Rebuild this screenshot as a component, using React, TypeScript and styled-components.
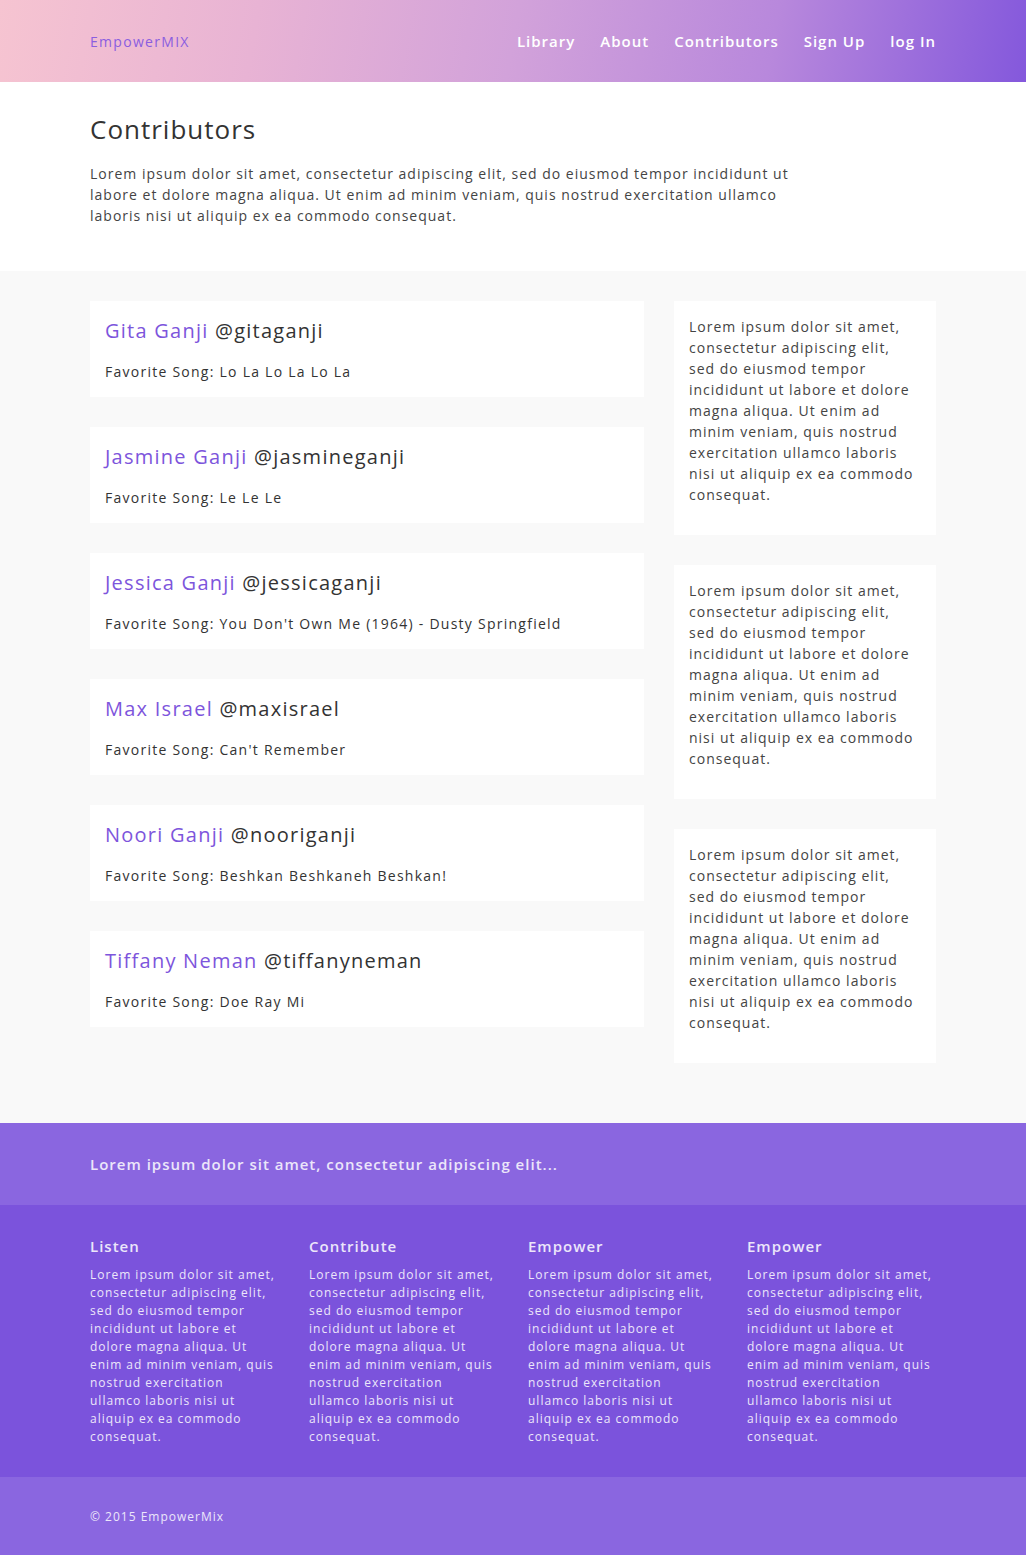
import React from 'react';
import styled, { createGlobalStyle } from 'styled-components';

type Contributor = {
  name: string;
  handle: string;
  song: string;
};

const contributors: Contributor[] = [
  { name: 'Gita Ganji', handle: '@gitaganji', song: 'Lo La Lo La Lo La' },
  { name: 'Jasmine Ganji', handle: '@jasmineganji', song: 'Le Le Le' },
  { name: 'Jessica Ganji', handle: '@jessicaganji', song: "You Don't Own Me (1964) - Dusty Springfield" },
  { name: 'Max Israel', handle: '@maxisrael', song: "Can't Remember" },
  { name: 'Noori Ganji', handle: '@nooriganji', song: 'Beshkan Beshkaneh Beshkan!' },
  { name: 'Tiffany Neman', handle: '@tiffanyneman', song: 'Doe Ray Mi' },
];

const lorem =
  'Lorem ipsum dolor sit amet, consectetur adipiscing elit, sed do eiusmod tempor incididunt ut labore et dolore magna aliqua. Ut enim ad minim veniam, quis nostrud exercitation ullamco laboris nisi ut aliquip ex ea commodo consequat.';

const footerColumns = ['Listen', 'Contribute', 'Empower', 'Empower'];

function App() {
  return (
    <>
      <GlobalStyle />
      <Header>
        <Inner>
          <HeaderRow>
            <Logo>EmpowerMIX</Logo>
            <Nav>
              <NavLink href='#'>Library</NavLink>
              <NavLink href='#'>About</NavLink>
              <NavLink href='#'>Contributors</NavLink>
              <NavLink href='#'>Sign Up</NavLink>
              <NavLink href='#'>log In</NavLink>
            </Nav>
          </HeaderRow>
        </Inner>
      </Header>

      <Intro>
        <Inner>
          <Title>Contributors</Title>
          <IntroText>{lorem}</IntroText>
        </Inner>
      </Intro>

      <ListSection>
        <Inner>
          <Columns>
            <div>
              {contributors.map((item) => (
                <Card key={item.handle}>
                  <Name>
                    <span>{item.name}</span> {item.handle}
                  </Name>
                  <Song>Favorite Song: {item.song}</Song>
                </Card>
              ))}
            </div>
            <div>
              {[0, 1, 2].map((i) => (
                <SideCard key={i}>
                  <p>{lorem}</p>
                </SideCard>
              ))}
            </div>
          </Columns>
        </Inner>
      </ListSection>

      <Tagline>
        <Inner>Lorem ipsum dolor sit amet, consectetur adipiscing elit...</Inner>
      </Tagline>

      <FooterMain>
        <Inner>
          <FooterGrid>
            {footerColumns.map((title, i) => (
              <FooterCol key={i}>
                <h4>{title}</h4>
                <p>{lorem}</p>
              </FooterCol>
            ))}
          </FooterGrid>
        </Inner>
      </FooterMain>

      <Copyright>
        <Inner>© 2015 EmpowerMix</Inner>
      </Copyright>
    </>
  );
}

export default App;

const GlobalStyle = createGlobalStyle`
  html, body {
    margin: 0;
    padding: 0;
  }
  body {
    font-family: 'Open Sans', 'Noto Sans', sans-serif;
    color: #333;
    letter-spacing: 1px;
    background: #fff;
  }
  * {
    box-sizing: border-box;
  }
`;

const Inner = styled.div`
  width: 846px;
  margin: 0 auto;
`;

const Header = styled.header`
  height: 82px;
  background: linear-gradient(100deg, #f6c4d1 0%, #e8b3d4 25%, #d2a2da 50%, #b888dc 75%, #8458dc 100%);
`;

const HeaderRow = styled.div`
  height: 82px;
  display: flex;
  align-items: center;
  justify-content: space-between;
`;

const Logo = styled.div`
  font-size: 14px;
  letter-spacing: 1.3px;
  color: #8a5ee0;
`;

const Nav = styled.nav`
  display: flex;
  gap: 25px;
`;

const NavLink = styled.a`
  color: #fff;
  font-size: 15px;
  font-weight: 600;
  text-decoration: none;
`;

const Intro = styled.section`
  padding: 31px 0 45px;
  background: #fff;
`;

const Title = styled.h1`
  margin: 0 0 18px;
  font-size: 26px;
  font-weight: 400;
  line-height: 32px;
`;

const IntroText = styled.p`
  margin: 0;
  max-width: 700px;
  font-size: 14px;
  line-height: 21px;
  color: #444;
`;

const ListSection = styled.section`
  background: #f9f9f9;
  padding: 30px 0;
`;

const Columns = styled.div`
  display: grid;
  grid-template-columns: 554px 262px;
  column-gap: 30px;
`;

const Card = styled.div`
  background: #fff;
  height: 96px;
  padding: 15px;
  margin-bottom: 30px;
`;

const Name = styled.div`
  font-size: 20px;
  line-height: 30px;
  letter-spacing: 1.25px;
  color: #333;

  span {
    color: #7d55dc;
  }
`;

const Song = styled.div`
  margin-top: 16px;
  font-size: 14px;
  line-height: 20px;
  letter-spacing: 1.25px;
  color: #333;
`;

const SideCard = styled.div`
  background: #fff;
  padding: 15px 20px 15px 15px;
  margin-bottom: 30px;

  p {
    margin: 0 0 15px;
    font-size: 14px;
    line-height: 21px;
    color: #444;
  }
`;

const Tagline = styled.section`
  background: #8a66e0;
  height: 82px;
  display: flex;
  align-items: center;
  color: #ece6fa;
  font-size: 15px;
  font-weight: 600;
`;

const FooterMain = styled.section`
  background: #7b53dc;
  padding: 31px 0 31px;
`;

const FooterGrid = styled.div`
  display: grid;
  grid-template-columns: repeat(4, 189px);
  column-gap: 30px;
`;

const FooterCol = styled.div`
  color: #ece6fa;

  h4 {
    margin: 0 0 10px;
    font-size: 15px;
    font-weight: 600;
    line-height: 20px;
  }

  p {
    margin: 0;
    max-width: 186px;
    font-size: 12px;
    line-height: 18px;
  }
`;

const Copyright = styled.footer`
  background: #8a66e0;
  height: 78px;
  display: flex;
  align-items: center;
  color: #ece6fa;
  font-size: 12px;
`;
